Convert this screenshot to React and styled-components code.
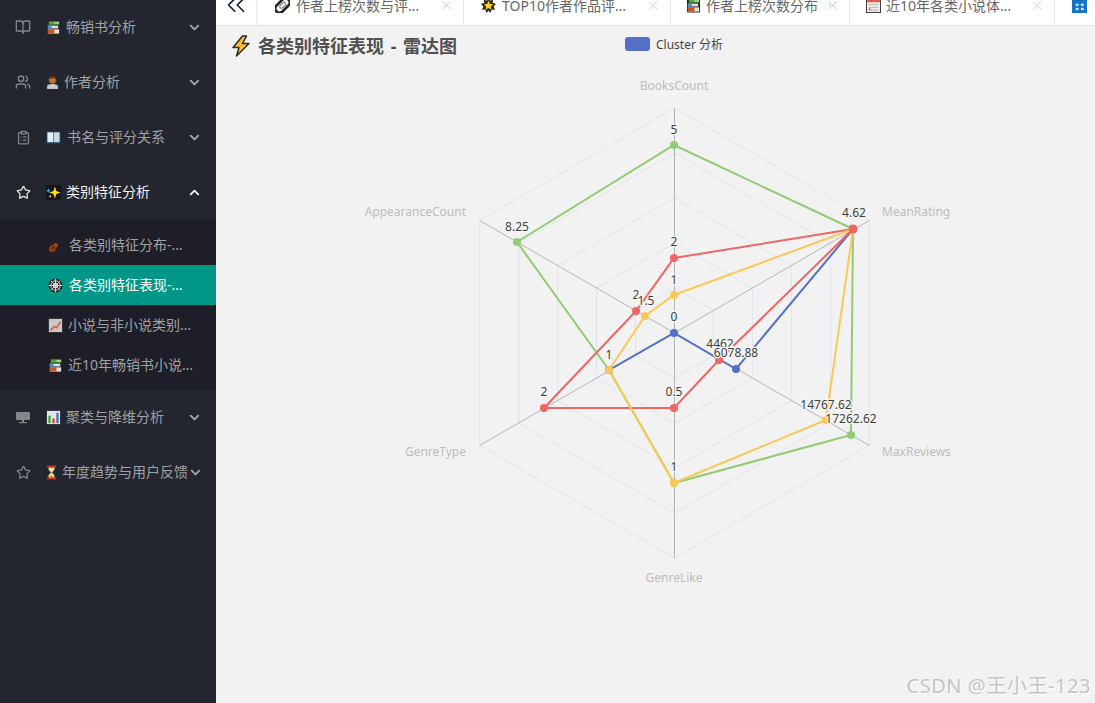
import React from 'react';
import styled, { createGlobalStyle } from 'styled-components';
import { BookOpen, Users, ClipboardList, Star, ChevronDown, ChevronUp, ChevronsLeft, X } from 'lucide-react';

const GlobalStyle = createGlobalStyle`
  html, body {
    margin: 0;
    height: 100%;
    overflow: hidden;
    background: #f2f2f2;
    font-family: "Noto Sans", "Noto Sans CJK SC", sans-serif;
  }
`;

const Layout = styled.div`
  display: flex;
  width: 1095px;
  height: 703px;
  position: relative;
  overflow: hidden;
`;
const Sidebar = styled.aside`
  width: 216px;
  flex: none;
  background: #23262e;
`;
const NavRow = styled.div`
  height: 55px;
  display: flex;
  align-items: center;
  padding: 0 14px 0 15px;
  color: ${(p) => (p.$open ? '#f2f2f2' : '#a0a1a5')};
  font-size: 14px;
  white-space: nowrap;
`;
const NavLabel = styled.span`
  margin-bottom: 4px;
`;
const NavIcon = styled.span`
  width: 16px;
  height: 16px;
  flex: none;
  margin-right: 15px;
  margin-bottom: 1px;
  display: flex;
  align-items: center;
  justify-content: center;
  color: ${(p) => (p.$open ? '#e6e6e6' : '#85868b')};
`;
const Arrow = styled.span`
  margin-left: auto;
  display: flex;
  color: ${(p) => (p.$open ? '#f2f2f2' : '#a5a6aa')};
`;
const SubMenu = styled.div`
  background: #1e1e28;
  padding: 5px 0;
`;
const SubRow = styled.div`
  height: 40px;
  display: flex;
  align-items: center;
  padding-left: 48px;
  font-size: 14px;
  white-space: nowrap;
  background: ${(p) => (p.$active ? '#009688' : 'transparent')};
  color: ${(p) => (p.$active ? '#ffffff' : '#a0a1a5')};
`;
const SubLabel = styled.span`
  margin-bottom: 2px;
`;
const Glyph = styled.svg`
  width: ${(p) => p.$w || 15}px;
  height: ${(p) => p.$h || 15}px;
  flex: none;
  margin-right: ${(p) => (p.$gap === undefined ? 6 : p.$gap)}px;
`;

const Main = styled.main`
  flex: 1;
  min-width: 0;
  display: flex;
  flex-direction: column;
`;
const TabBar = styled.div`
  height: 25px;
  flex: none;
  display: flex;
  align-items: flex-end;
  background: #fff;
  border-bottom: 1px solid #e2e2e2;
  overflow: hidden;
`;
const Collapse = styled.div`
  width: 40px;
  height: 40px;
  flex: none;
  display: flex;
  align-items: center;
  justify-content: center;
  color: #14233a;
  border-right: 2px solid #efefef;
`;
const Tab = styled.div`
  width: ${(p) => p.$w}px;
  height: 40px;
  flex: none;
  box-sizing: border-box;
  display: flex;
  align-items: center;
  padding-left: ${(p) => p.$pad || 17}px;
  font-size: 14px;
  color: #666;
  white-space: nowrap;
  border-right: 1px solid #e9e9e9;
`;
const TabClose = styled.span`
  margin-left: auto;
  margin-right: 9px;
  display: flex;
  color: #bdbdbd;
`;
const Content = styled.section`
  flex: 1;
  min-height: 0;
  display: flex;
  flex-direction: column;
`;
const Head = styled.div`
  height: 40px;
  flex: none;
  display: flex;
  align-items: center;
  padding-left: 15px;
`;
const Title = styled.h1`
  width: 394px;
  flex: none;
  margin: 0;
  display: flex;
  align-items: center;
  font-size: 18px;
  font-weight: 700;
  color: #505050;
  white-space: pre;
  word-spacing: 2px;
`;
const TitleText = styled.span`
  margin-bottom: 2px;
`;
const Legend = styled.div`
  display: flex;
  align-items: center;
  gap: 6px;
  margin-top: -4px;
  font-size: 12px;
  color: #444;
`;
const LegendSwatch = styled.i`
  width: 25px;
  height: 14px;
  border-radius: 3px;
  background: #5470c6;
`;
const Chart = styled.svg`
  display: block;
  flex: 1;
  min-height: 0;
  width: 100%;
  font-family: "Noto Sans", "Noto Sans CJK SC", sans-serif;
  font-size: 12px;
`;
const Watermark = styled.div`
  position: absolute;
  right: 4px;
  bottom: 4px;
  font-size: 20px;
  letter-spacing: 0.55px;
  color: #c4c4c4;
  text-shadow: 1px 1px 1px #fff;
`;
const DataLabel = styled.text`
  fill: #404040;
  text-anchor: middle;
  dominant-baseline: central;
  paint-order: stroke;
  stroke: #f6f6f6;
  stroke-width: 2.5px;
  stroke-linejoin: round;
`;
const AxisName = styled.text`
  fill: #bcbcbc;
  dominant-baseline: central;
  text-anchor: ${(p) => p.$anchor};
`;

// emoji drawn by hand, no emoji font on the machine
const Books = (props) => (
  <Glyph viewBox="0 0 16 16" {...props}>
    <rect x="1" y="0.5" width="14" height="15" rx="1" fill="#2b2320" />
    <rect x="3" y="1.500" width="11" height="3.500" fill="#4fa83d" />
    <rect x="9" y="2.500" width="5" height="1.200" fill="#dfe6d8" />
    <rect x="2" y="6" width="11" height="3" fill="#dfe2e6" />
    <rect x="2" y="6" width="4" height="3" fill="#3f8fd0" />
    <rect x="2" y="10" width="12" height="4.500" fill="#e2e2e2" />
    <rect x="2" y="10" width="7" height="4.500" fill="#c8561f" />
  </Glyph>
);
const Person = (props) => (
  <Glyph viewBox="0 0 14 16" {...props}>
    <path d="M.7 15.500V12.500q0-3 3-3h6.600q3 0 3 3v3z" fill="#c9ccd0" stroke="#222" strokeWidth="1" />
    <path d="M5.500 9.500L7 12l1.500-2.500z" fill="#f2f2f2" />
    <circle cx="7" cy="5.200" r="4.300" fill="#b5793f" stroke="#3a2412" strokeWidth=".8" />
    <path d="M2.900 5Q3 .9 7 .9T11.100 5Q10 3.400 7 3.400T2.900 5z" fill="#5a3515" />
  </Glyph>
);
const OpenBook = (props) => (
  <Glyph viewBox="0 0 16 16" {...props}>
    <rect x=".5" y="1.500" width="15" height="13" fill="#1d4a72" />
    <rect x="1.500" y="2.500" width="6.200" height="10.500" fill="#e8eef2" />
    <rect x="8.300" y="2.500" width="6.200" height="10.500" fill="#cfd9df" />
  </Glyph>
);
const Sparkles = (props) => (
  <Glyph viewBox="0 0 16 16" {...props}>
    <rect width="16" height="16" fill="#14141a" rx="2" />
    <path d="M9.500 1.500l1.500 5 4.500 1.500-4.500 1.500-1.500 5-1.500-5-4.500-1.500 4.500-1.500z" fill="#ffe60a" />
    <path d="M2.500 3.500l.8 1.700 1.700.8-1.700.8-.8 1.700-.8-1.700L0 6l1.700-.8z" fill="#27b6e6" />
    <path d="M4.500 10l.6 1.400 1.400.6-1.400.6-.6 1.400-.6-1.400-1.400-.6 1.400-.6z" fill="#f08ac0" />
  </Glyph>
);
const Violin = (props) => (
  <Glyph viewBox="0 0 16 16" {...props}>
    <path d="M8 8L15 1" stroke="#2a1a10" strokeWidth="1.800" />
    <ellipse cx="5" cy="11" rx="5" ry="4" transform="rotate(-45 5 11)" fill="#8c3d16" stroke="#2a1a10" strokeWidth=".6" />
    <ellipse cx="8" cy="8" rx="3" ry="2.600" transform="rotate(-45 8 8)" fill="#a04a1c" stroke="#2a1a10" strokeWidth=".6" />
    <path d="M4 12l4-4" stroke="#2a1a10" strokeWidth=".8" />
  </Glyph>
);
const Web = (props) => (
  <Glyph viewBox="0 0 16 16" {...props}>
    <circle cx="8" cy="8" r="7.500" fill="#26262c" />
    <g stroke="#e8e8e8" strokeWidth=".9" fill="none">
      <path d="M8 .8v14.400M.8 8h14.400M3 3l10 10M13 3L3 13" />
      <circle cx="8" cy="8" r="2.500" />
      <circle cx="8" cy="8" r="5" />
    </g>
  </Glyph>
);
const ChartUp = (props) => (
  <Glyph viewBox="0 0 16 16" {...props}>
    <rect x=".5" y=".5" width="15" height="15" fill="#c8c8c8" stroke="#33333a" />
    <path d="M2.500 13L7 9l2 1.500L13.500 4" stroke="#d9553a" strokeWidth="1.500" fill="none" />
  </Glyph>
);
const Bars = (props) => (
  <Glyph viewBox="0 0 16 16" {...props}>
    <rect x=".5" y=".5" width="15" height="15" fill="#e2e6ea" stroke="#33333a" />
    <rect x="2.500" y="6" width="2.500" height="8" fill="#3ba34a" />
    <rect x="6.800" y="9" width="2.500" height="5" fill="#d8452e" />
    <rect x="11" y="3" width="2.500" height="11" fill="#3a78c8" />
  </Glyph>
);
const Hourglass = (props) => (
  <Glyph viewBox="0 0 12 16" {...props}>
    <path d="M2.500 2h7v3L6.800 8l2.700 3v3h-7v-3l2.700-3-2.700-3z" fill="#eadcae" stroke="#3b2a1a" strokeWidth=".6" />
    <path d="M3.500 13.500L6 10.500l2.500 3z" fill="#d89a3a" />
    <rect x="1" y=".5" width="10" height="2" fill="#c23c22" />
    <rect x="1" y="13.500" width="10" height="2" fill="#c23c22" />
  </Glyph>
);
const Clip = (props) => (
  <Glyph viewBox="0 0 16 16" {...props}>
    <g transform="rotate(-45 8 8)" fill="none">
      <rect x="-1" y="3.500" width="18" height="9" rx="4.500" stroke="#26262a" strokeWidth="2.800" />
      <rect x="4.500" y="6.200" width="7.500" height="3.600" rx="1.800" stroke="#8b8b8b" strokeWidth="1.400" />
    </g>
  </Glyph>
);
const Burst = (props) => (
  <Glyph viewBox="0 0 16 16" {...props}>
    <path d="M8 0l1.600 3L13 1.500 12.500 5 16 6.500 13.500 9l1.500 3.500-3.500-.2L10 16l-2-2.600L6 16l-1.500-3.700-3.500.2L2.500 9 0 6.500 3.500 5 3 1.500 6.400 3z" fill="#2a2a22" />
    <path d="M8 3l1.500 3.300 3.500.4-2.600 2.300.8 3.500L8 10.700 4.800 12.500l.8-3.500L3 6.700l3.500-.4z" fill="#ffd21e" />
  </Glyph>
);
const Calendar = (props) => (
  <Glyph viewBox="0 0 16 16" {...props}>
    <rect x=".5" y=".5" width="15" height="15" fill="#ececec" stroke="#3a3030" />
    <rect x="1" y="1" width="14" height="3.500" fill="#d9614a" />
    <path d="M3 7h10M3 10h10M3 13h10" stroke="#b8b8b8" />
    <rect x="3" y="11" width="2" height="2" fill="#d9614a" />
  </Glyph>
);
const AbcBlock = (props) => (
  <Glyph viewBox="0 0 16 16" {...props}>
    <rect width="16" height="16" fill="#1573c8" />
    <g fill="#cfe4f7">
      <rect x="4" y="6" width="3" height="2.500" />
      <rect x="9.500" y="6" width="3" height="2.500" />
      <rect x="4" y="10.500" width="3" height="2.500" />
      <rect x="9.500" y="10.500" width="3" height="2.500" />
    </g>
  </Glyph>
);
const Bolt = (props) => (
  <Glyph viewBox="0 0 20 22" {...props}>
    <path d="M11.500 1L2 12.500h6L5.500 21 18 8.500h-6.500L15.500 1z" fill="#fbbd2e" stroke="#2b2b2b" strokeWidth="1.500" strokeLinejoin="round" />
  </Glyph>
);
const Monitor = () => (
  <svg width="14" height="14" viewBox="0 0 14 14" fill="currentColor">
    <rect x="0" y="2" width="14" height="8" rx="1" />
    <rect x="6" y="10" width="2" height="2" />
    <rect x="3" y="12" width="8" height="1.200" />
  </svg>
);

const navGroups = [
  { icon: <BookOpen size={16} />, emoji: <Books $gap={5} />, label: '畅销书分析' },
  { icon: <Users size={16} />, emoji: <Person $w={13} $h={15} $gap={5} />, label: '作者分析' },
  { icon: <ClipboardList size={15} />, emoji: <OpenBook $gap={6} />, label: '书名与评分关系' },
  {
    icon: <Star size={15} />,
    emoji: <Sparkles $gap={5} />,
    label: '类别特征分析',
    open: true,
    items: [
      { emoji: <Violin />, label: '各类别特征分布-…' },
      { emoji: <Web />, label: '各类别特征表现-…', active: true },
      { emoji: <ChartUp $gap={5} />, label: '小说与非小说类别…' },
      { emoji: <Books $gap={5} />, label: '近10年畅销书小说…' },
    ],
  },
  { icon: <Monitor />, emoji: <Bars $gap={5} />, label: '聚类与降维分析' },
  { icon: <Star size={15} />, emoji: <Hourglass $w={11} $gap={5} />, label: '年度趋势与用户反馈' },
];

const tabs = [
  { emoji: <Clip />, label: '作者上榜次数与评…', w: 206 },
  { emoji: <Burst />, label: 'TOP10作者作品评…', w: 207 },
  { emoji: <Books $gap={5} />, label: '作者上榜次数分布', w: 179, pad: 15 },
  { emoji: <Calendar $gap={5} />, label: '近10年各类小说体…', w: 205, pad: 16 },
];

// radar geometry in page coordinates, centre of the web and its six spokes
const CX = 674.5;
const CY = 333;
const spokes = [0, 60, 120, 180, 240, 300].map((deg) => (deg * Math.PI) / 180);
const ringPoints = (r) =>
  spokes.map((a) => `${CX + r * Math.sin(a)},${CY - r * Math.cos(a)}`).join(' ');

const series = [
  {
    color: '#91cc75',
    closed: true,
    points: [[674, 145], [853, 229], [851, 435], [674, 483], [609, 370], [517, 242]],
  },
  {
    color: '#5470c6',
    closed: false,
    points: [[853, 229], [736, 369], [674, 333], [609, 370]],
  },
  {
    color: '#ee6666',
    closed: true,
    points: [[674, 258], [853, 229], [719, 360], [674, 408], [544, 408], [636, 311]],
  },
  {
    color: '#fac858',
    closed: true,
    points: [[674, 295], [853, 229], [826, 420], [674, 483], [609, 370], [645, 316]],
  },
];

const labels = [
  ['5', 674, 129], ['2', 674, 241], ['1', 674, 279], ['0', 674, 316], ['0.5', 674, 391],
  ['1', 674, 466], ['2', 544, 391], ['1', 609, 354], ['2', 636, 294], ['1.5', 646, 300],
  ['8.25', 517, 226], ['4.62', 854, 212], ['4462', 720, 343], ['6078.88', 736, 352],
  ['14767.62', 826, 404], ['17262.62', 851, 418],
];

const axisNames = [
  ['BooksCount', 674, 85, 'middle'],
  ['MeanRating', 882, 211, 'start'],
  ['MaxReviews', 882, 451, 'start'],
  ['GenreLike', 674, 577, 'middle'],
  ['GenreType', 466, 451, 'end'],
  ['AppearanceCount', 466, 211, 'end'],
];

const App = () => {
  return (
    <Layout>
      <GlobalStyle />
      <Sidebar>
        {navGroups.map((group) => (
          <React.Fragment key={group.label}>
            <NavRow $open={group.open}>
              <NavIcon $open={group.open}>{group.icon}</NavIcon>
              {group.emoji}
              <NavLabel>{group.label}</NavLabel>
              <Arrow $open={group.open}>
                {group.open ? (
                  <ChevronUp size={15} strokeWidth={3} />
                ) : (
                  <ChevronDown size={15} strokeWidth={3} />
                )}
              </Arrow>
            </NavRow>
            {group.items && (
              <SubMenu>
                {group.items.map((item) => (
                  <SubRow key={item.label} $active={item.active}>
                    {item.emoji}
                    <SubLabel>{item.label}</SubLabel>
                  </SubRow>
                ))}
              </SubMenu>
            )}
          </React.Fragment>
        ))}
      </Sidebar>
      <Main>
        <TabBar>
          <Collapse>
            <ChevronsLeft size={30} strokeWidth={1.4} />
          </Collapse>
          {tabs.map((tab) => (
            <Tab key={tab.label} $w={tab.w} $pad={tab.pad}>
              {tab.emoji}
              {tab.label}
              <TabClose>
                <X size={15} strokeWidth={1.2} />
              </TabClose>
            </Tab>
          ))}
          <Tab $w={60}>
            <AbcBlock />
          </Tab>
        </TabBar>
        <Content>
          <Head>
            <Title>
              <Bolt $w={20} $h={22} $gap={7} />
              <TitleText>各类别特征表现 - 雷达图</TitleText>
            </Title>
            <Legend>
              <LegendSwatch />
              Cluster 分析
            </Legend>
          </Head>
          <Chart viewBox="216 66 879 637" preserveAspectRatio="xMinYMin meet">
            {[45, 90, 135, 180, 225].map((r) => (
              <polygon key={r} points={ringPoints(r)} fill="none" stroke="#dfe4ef" />
            ))}
            {spokes.map((a) => (
              <line
                key={a}
                x1={CX}
                y1={CY}
                x2={CX + 225 * Math.sin(a)}
                y2={CY - 225 * Math.cos(a)}
                stroke="#b4b4b4"
              />
            ))}
            {series.map((s) => {
              const pts = s.points.map((p) => p.join(',')).join(' ');
              return s.closed ? (
                <polygon key={s.color} points={pts} fill="none" stroke={s.color} strokeWidth="2" />
              ) : (
                <polyline key={s.color} points={pts} fill="none" stroke={s.color} strokeWidth="2" />
              );
            })}
            {series.map((s) =>
              s.points.map((p) => (
                <circle key={s.color + p.join()} cx={p[0]} cy={p[1]} r="4" fill={s.color} />
              ))
            )}
            <circle cx="853" cy="229" r="4.500" fill="#ee6666" />
            {axisNames.map(([name, x, y, anchor]) => (
              <AxisName key={name} x={x} y={y} $anchor={anchor}>
                {name}
              </AxisName>
            ))}
            {labels.map(([text, x, y]) => (
              <DataLabel key={`${text}-${x}-${y}`} x={x} y={y}>
                {text}
              </DataLabel>
            ))}
          </Chart>
        </Content>
      </Main>
      <Watermark>CSDN @王小王-123</Watermark>
    </Layout>
  );
};

export default App;
